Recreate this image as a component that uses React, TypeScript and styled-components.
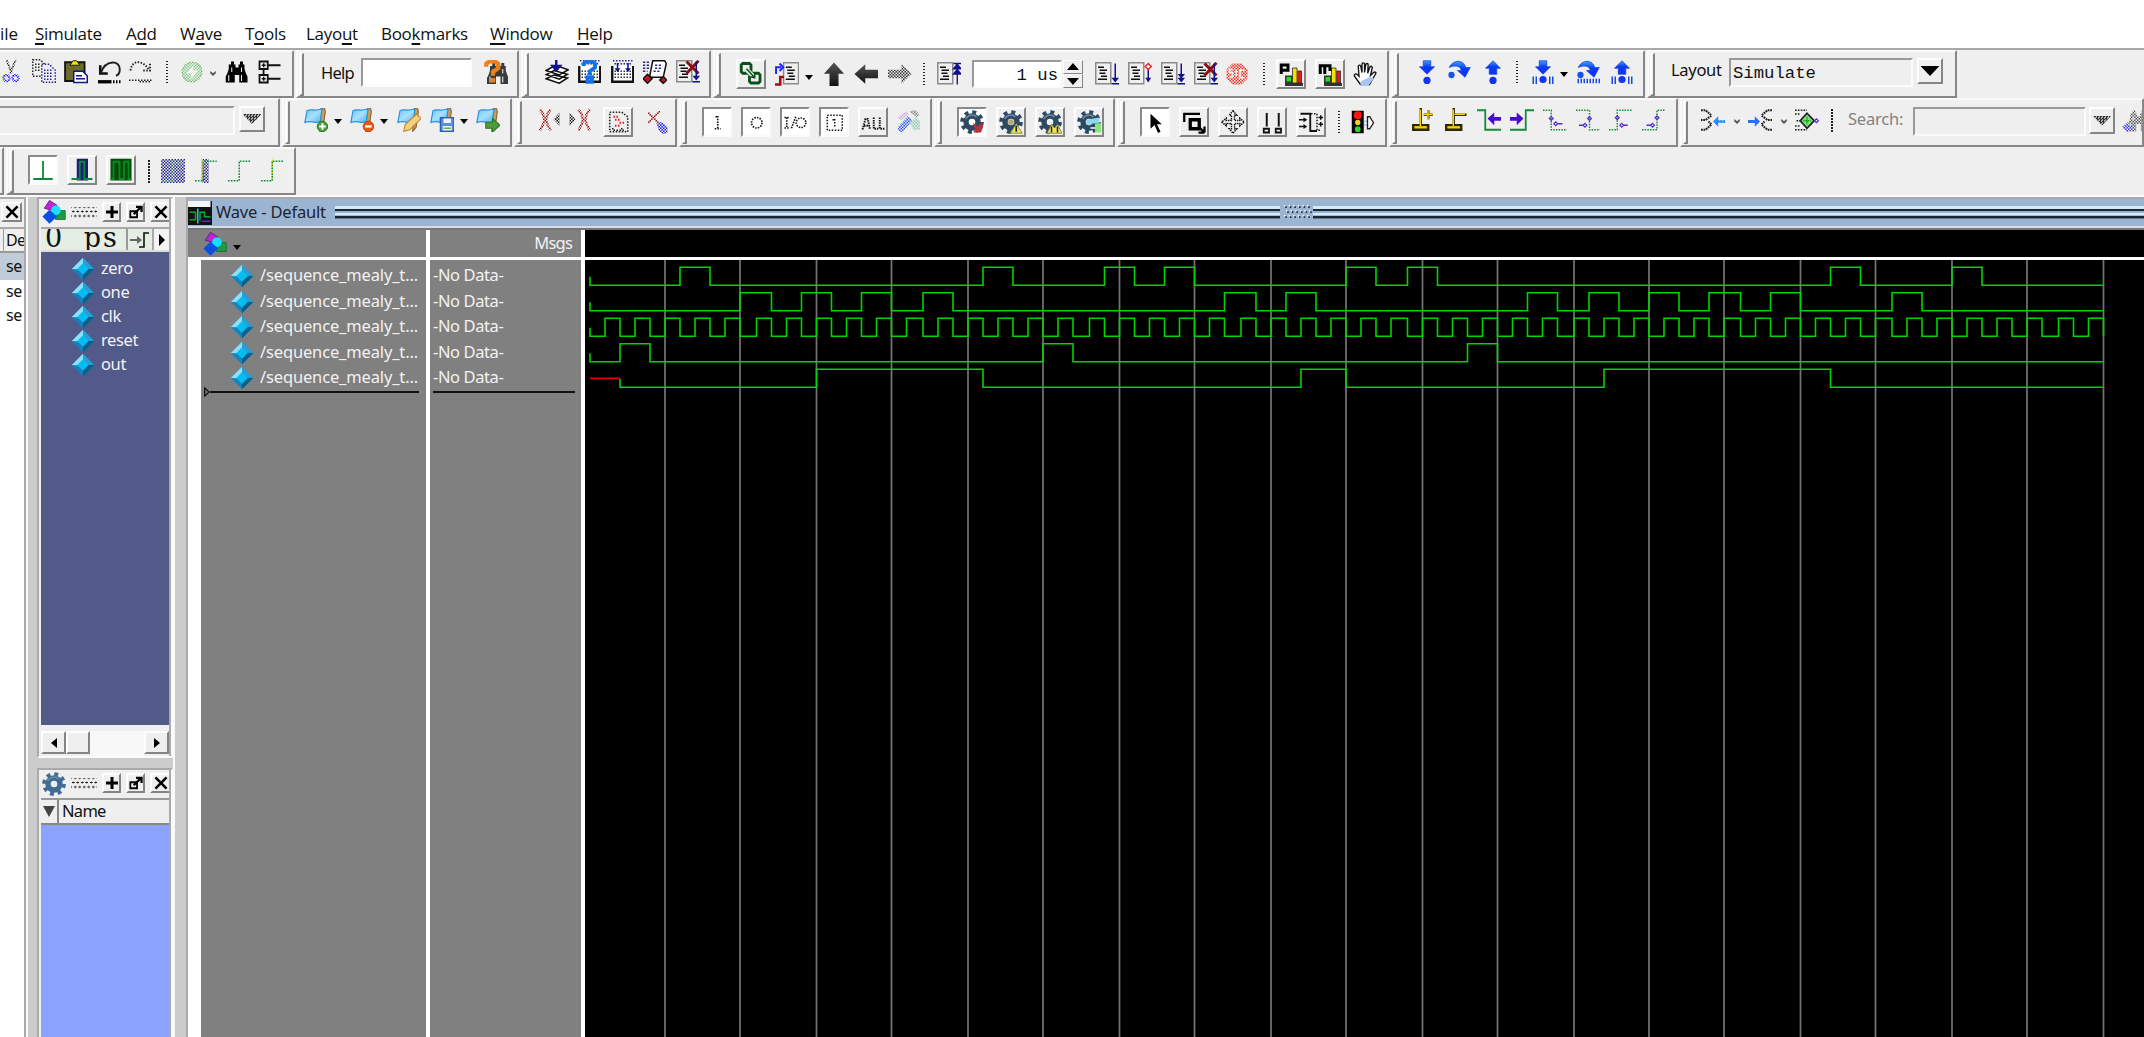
import React, { ReactNode } from "react";
import styled, { createGlobalStyle, css } from "styled-components";

const Global = createGlobalStyle`
  * { box-sizing: border-box; }
  html, body { margin: 0; padding: 0; overflow: hidden; background: #efefef; }
`;

const ui = `"Noto Sans", "Open Sans", sans-serif`;
const mono = `"Liberation Mono", "DejaVu Sans Mono", monospace`;

/* ---------- shell ---------- */
const Window = styled.div`
  width: 2144px;
  height: 1037px;
  display: flex;
  flex-direction: column;
  overflow: hidden;
  background: #efefef;
  font-family: ${ui};
  font-size: 16px;
  color: #111;
`;

const MenuBar = styled.nav`
  height: 50px;
  flex: none;
  display: flex;
  align-items: flex-start;
  padding-top: 22px;
  background: #fff;
  border-bottom: 2px solid #a8a8a8;
`;

const MenuItem = styled.span<{ $w: number; $ls?: number }>`
  width: ${(p) => p.$w}px;
  flex: none;
  font: 17px/24px "Open Sans", sans-serif;
  letter-spacing: ${(p) => p.$ls ?? -0.3}px;
  white-space: nowrap;
  u { text-underline-offset: 3px; text-decoration-thickness: 1.5px; text-decoration-skip-ink: none; }
`;

const BarRow = styled.div<{ $h: number }>`
  height: ${(p) => p.$h}px;
  flex: none;
  display: flex;
  overflow: hidden;
`;

const Bar = styled.section<{ $w: number; $first?: boolean }>`
  width: ${(p) => p.$w}px;
  flex: none;
  margin-right: 2px;
  display: flex;
  align-items: flex-start;
  border: solid;
  border-width: 2px 2px 2px ${(p) => (p.$first ? 0 : 2)}px;
  border-color: #fafafa #868686 #868686 #fafafa;
  overflow: hidden;
`;

const Handle = styled.i`
  width: 5px;
  height: 43px;
  margin: 1px 0 0 1px;
  flex: none;
  border: solid;
  border-width: 1px 2px 2px 2px;
  border-color: #fff #858585 #858585 #fff;
`;

interface Place { $ml?: number; $mt?: number; $w?: number; $h?: number }
const place = css<Place>`
  flex: none;
  margin-left: ${(p) => p.$ml ?? 9}px;
  margin-top: ${(p) => p.$mt ?? 8}px;
`;

const Glyph = styled.svg<Place>`
  ${place}
  width: 24px;
  height: 24px;
  display: block;
`;

const PushButton = styled.div<Place & { $in?: boolean }>`
  ${place}
  width: ${(p) => p.$w ?? 30}px;
  height: ${(p) => p.$h ?? 30}px;
  display: flex;
  align-items: center;
  justify-content: center;
  background: ${(p) => (p.$in ? "#fff" : "#efefef")};
  border: 2px solid;
  border-color: ${(p) => (p.$in ? "#8a8a8a #fafafa #fafafa #8a8a8a" : "#fdfdfd #848484 #848484 #fdfdfd")};
`;

const Field = styled.div<Place & { $plain?: boolean; $right?: boolean }>`
  ${place}
  width: ${(p) => p.$w}px;
  height: ${(p) => p.$h ?? 29}px;
  border: 2px solid;
  border-color: #999 #fcfcfc #fcfcfc #999;
  background: ${(p) => (p.$plain ? "#efefef" : "#fff")};
  font: 17.3px/28px ${mono};
  padding: 0 2px;
  text-align: ${(p) => (p.$right ? "right" : "left")};
  white-space: pre;
`;

const BarLabel = styled.span<Place & { $dim?: boolean; $ls?: number }>`
  ${place}
  width: ${(p) => p.$w}px;
  line-height: 24px;
  font-size: 16.5px;
  letter-spacing: ${(p) => p.$ls ?? -0.8}px;
  color: ${(p) => (p.$dim ? "#828282" : "#111")};
  white-space: nowrap;
`;

const Divider = styled.i<Place>`
  ${place}
  width: 2px;
  height: 24px;
  background: repeating-linear-gradient(#222 0 1.5px, #efefef 1.5px 3px);
`;

const Down = styled.i<Place & { $dim?: boolean }>`
  ${place}
  width: 8px;
  height: 5px;
  background: ${(p) => (p.$dim ? "#555" : "#000")};
  clip-path: ${(p) => (p.$dim ? "polygon(15% 0, 50% 45%, 85% 0, 85% 45%, 50% 100%, 15% 45%)" : "polygon(0 0, 100% 0, 50% 100%)")};
`;

const BigDown = styled.i<{ $dim?: boolean }>`
  width: 19px;
  height: 10px;
  background: ${(p) => (p.$dim ? "repeating-conic-gradient(#333 0 25%, #aaa 0 50%) 0 0/3px 3px" : "#000")};
  clip-path: polygon(0 0, 100% 0, 50% 100%);
`;

const Spinner = styled.div<Place>`
  ${place}
  width: 20px;
  height: 28px;
  display: grid;
  grid-template-rows: 1fr 1fr;
  span { display: flex; align-items: center; justify-content: center; border: 1.5px solid; border-color: #fdfdfd #848484 #848484 #fdfdfd; }
`;

/* ---------- icons, drawn on a 16 unit grid ---------- */
const Ico = ({ ml, mt, dim, children }: { ml?: number; mt?: number; dim?: boolean; children: ReactNode }) => (
  <Glyph viewBox="0 0 16 16" $ml={ml} $mt={mt}>
    {children}
    {dim && <rect width="16" height="16" fill="url(#dither)" />}
  </Glyph>
);
const Inner = ({ dim, children }: { dim?: "grey" | "white"; children: ReactNode }) => (
  <Ico ml={0} mt={0}>
    {children}
    {dim && <rect width="16" height="16" fill={dim === "white" ? "url(#ditherWhite)" : "url(#dither)"} />}
  </Ico>
);

const SharedDefs = styled.svg`
  position: absolute;
  width: 0;
  height: 0;
`;
const Defs = () => (
  <SharedDefs>
    <defs>
      <pattern id="dither" width="2" height="2" patternUnits="userSpaceOnUse">
        <path d="M0 0h1v1H0zM1 1h1v1H1z" fill="#efefef" />
      </pattern>
      <pattern id="ditherWhite" width="2" height="2" patternUnits="userSpaceOnUse">
        <path d="M0 0h1v1H0zM1 1h1v1H1z" fill="#fff" />
      </pattern>
      <linearGradient id="arrowBlue" x1="0" y1="0" x2="0" y2="1">
        <stop offset="0" stopColor="#3aa0ff" /><stop offset=".45" stopColor="#0a3cf0" /><stop offset="1" stopColor="#1030ff" />
      </linearGradient>
      <linearGradient id="arrowDark" x1="0" y1="0" x2="0" y2="1">
        <stop offset="0" stopColor="#555" /><stop offset="1" stopColor="#111" />
      </linearGradient>
      <linearGradient id="flagBlue" x1="0" y1="0" x2="1" y2="1">
        <stop offset="0" stopColor="#6cc4fa" /><stop offset=".5" stopColor="#a6e0ff" /><stop offset="1" stopColor="#4fb4f2" />
      </linearGradient>
    </defs>
  </SharedDefs>
);

const Binoculars = ({ c = "#000" }) => (
  <g fill={c}>
    <path d="M4 1h2v2h1v2h2V3h1V1h2v2h1v3l1 3 1 2v4H9.500v-5H6.500v5H0.500v-4l1-2 1-3V3h1.500z" />
    <path d="M2.500 10v4M4.500 5v3M11 10v4M11 5v3" stroke="#eee" strokeWidth=".7" fill="none" />
  </g>
);
const Doc = () => (
  <>
    <path d="M.5.500h10v14H.500z" fill="#efefef" stroke="#8b8b8b" />
    <path d="M2 3.500h4M3 5.500h5M3 7.500h4M4 9.500h4M2 11.500h6" stroke="#111" />
  </>
);
const Flag = () => (
  <>
    <path d="M11.500 .500h2.300l.4 2-1.500 10.500-2.200 2.500z" fill="#c99d62" stroke="#8a5d25" strokeWidth=".7" />
    <path d="M2 1.800C4.500 .300 7 2.500 12 .500L10.800 9C8 11 5 7.800.600 9.600z" fill="url(#flagBlue)" stroke="#2f93d6" strokeWidth=".8" />
  </>
);
const Gear = ({ c = "#2e4a63", hole = "#efefef" }) => (
  <>
    <circle cx="8" cy="8" r="6.600" fill="none" stroke={c} strokeWidth="2.600" strokeDasharray="2.600 2.580" />
    <circle cx="8" cy="8" r="4" fill="none" stroke={c} strokeWidth="3.600" />
    <path d="M3.800 6A4.500 4.500 0 0 1 11 4.600" stroke="#6d8ba6" strokeWidth="1" fill="none" />
    <circle cx="8" cy="8" r="1.900" fill={hole} />
  </>
);
const BlueDown = () => <path d="M5.500.500h5v4H13L8 9.500 3 4.500h2.500z" fill="url(#arrowBlue)" stroke="#1540d8" strokeWidth=".5" />;
const BlueUp = () => <path d="M8 .500l5 5h-2.500v4h-5v-4H3z" fill="url(#arrowBlue)" stroke="#1540d8" strokeWidth=".5" />;
const BlueOver = () => (
  <>
    <path d="M1.500 5C4-.500 11-.500 12.500 5H15.500L12 11.500 7 7h2.500C9 3.500 4.500 3.500 1.500 5z" fill="url(#arrowBlue)" stroke="#1540d8" strokeWidth=".5" />
    <circle cx="3" cy="10" r="2.100" fill="#1852e8" />
  </>
);
const BlueDot = () => <circle cx="8" cy="13" r="2.400" fill="#1034f0" />;
const Bars = () => <path d="M1.500 11v5M3.500 11v5M12.500 11v5M14.500 11v5" stroke="#1a48e0" />;
const Calendar = () => (
  <>
    <path d="M1.500 4v10.500h14V4" fill="#fff" stroke="#111" strokeWidth="1.600" />
    <path d="M2 .500h13M3 2.500h12" stroke="#26268c" strokeDasharray="1 1" />
    <path d="M3 7.500h11M3 9.500h11M3 11.500h11" stroke="#333" strokeDasharray="1 1" />
  </>
);
const RedCross = () => <path d="M7 1l8 8M15 .500L7 9" stroke="#8b0c0c" strokeWidth="1.900" />;
const NavyDown = () => <path d="M13.500 1v10" stroke="#11118c" />;
const NavyHead = () => <path d="M11 10.500h5l-2.500 3.200zM11 14h5v1h-5z" fill="#11118c" />;

const Chart = ({ l }: { l: "P" | "m" }) => (
  <>
    <path d="M4 9h5v5h7v2H4z" fill="#333" />
    <path d="M5 10h3v3H5z" fill="#1ee01e" />
    <path d="M9 4h3v10H9z" fill="#f6e000" stroke="#222" strokeWidth=".5" />
    <path d="M12.500 6H15v8h-2.500z" fill="#e8191b" stroke="#222" strokeWidth=".5" />
    {l === "P"
      ? <path d="M1.500 8V2h4.500v3.500H2" fill="none" stroke="#000" strokeWidth="2" />
      : <path d="M1.500 8V2.500h3V8M4.500 2.500h3.500V6" fill="none" stroke="#000" strokeWidth="2" />}
  </>
);
const Magnet = () => (
  <>
    <path d="M5 .300l5 3.200L7 7 1.500 5.500z" fill="#c024d8" stroke="#5b0b70" strokeWidth=".5" />
    <path d="M9 7h6.500v6H9z" fill="#1f9a41" stroke="#0b6a25" strokeWidth=".5" />
    <circle cx="9.300" cy="6.800" r="3.200" fill="#14e0ff" />
    <path d="M5 6.500l5 4.500-5 4.800L.300 11z" fill="#0a4fe0" />
  </>
);
const Diamond = () => (
  <>
    <path d="M8 .5L15.500 8 8 15.500.500 8z" fill="#1484bf" />
    <path d="M8 .5L.500 8l4.200.2L8 4.500z" fill="#8fe0f6" />
    <path d="M8 .5L15.500 8l-4.200.2L8 4.500z" fill="#24a0da" />
    <path d="M8 15.500L15.500 8l-4.200-.2L8 11.600z" fill="#075f8b" />
    <path d="M8 4.200L11.800 8 8 11.800 4.200 8z" fill="#06bdf2" />
  </>
);
const EdgeStep = ({ d, arrow }: { d: string; arrow: ReactNode }) => (
  <>
    <path d={d} fill="none" stroke="#138a3c" strokeDasharray="1 .8" />
    {arrow}
  </>
);
const Spot = ({ x, y }: { x: number; y: number }) => (
  <path d={`M${x} ${y - 1.3}l1.300 1.300-1.300 1.300-1.300-1.300z`} fill="none" stroke="#5a28d0" strokeWidth=".8" />
);

/* ---------- docked panels ---------- */
const Dock = styled.div`
  flex: 1;
  display: flex;
  min-height: 0;
  border-top: 2px solid #fafafa;
`;
const SidePane = styled.aside`
  width: 26px;
  flex: none;
  background: #fff;
  border-top: 2px solid #aaa;
  border-right: 2px solid #aaa;
  overflow: hidden;
`;
const PaneTitle = styled.header<{ $h: number }>`
  height: ${(p) => p.$h}px;
  flex: none;
  display: flex;
  align-items: flex-start;
  background: #efefef;
  overflow: hidden;
`;
const SideHead = styled.div`
  height: 26px;
  border-top: 2px solid #aaa;
  border-bottom: 2px solid #999;
  background: #efefef;
  padding-left: 3px;
  span { display: block; border-left: 1.5px solid #999; padding-left: 2px; line-height: 23px; font-size: 16px; letter-spacing: -0.6px; }
`;
const SideRow = styled.div<{ $on?: boolean; $h: number }>`
  height: ${(p) => p.$h}px;
  line-height: ${(p) => p.$h}px;
  padding-left: 6px;
  width: 24px;
  overflow: hidden;
  font-size: 16px;
  letter-spacing: -0.3px;
  background: ${(p) => (p.$on ? "#c0ccda" : "#fff")};
`;
const Gutter = styled.div<{ $w: number }>`
  width: ${(p) => p.$w}px;
  flex: none;
  background: #ccc;
  border-left: 2px solid #fafafa;
`;
const Column = styled.div`
  width: 136px;
  flex: none;
  display: flex;
  flex-direction: column;
  gap: 10px;
  background: #ccc;
`;
const Panel = styled.section<{ $h: number }>`
  height: ${(p) => p.$h}px;
  flex: none;
  display: flex;
  flex-direction: column;
  padding-left: 2px;
  padding-right: 2px;
  background: #efefef;
  border: 2px solid;
  border-color: #aaa #fafafa #fafafa #aaa;
  box-shadow: inset -2px 0 #aaa;
`;
const Grip = styled.i`
  width: 26px;
  height: 12px;
  margin: 8px 0 0 5px;
  background:
    radial-gradient(circle, #222 0 .9px, transparent 1.1px) 0 0 / 4.500px 9px,
    radial-gradient(circle, #222 0 .9px, transparent 1.1px) 2px 4.500px / 4.500px 9px;
  flex: none;
`;
const TimeStrip = styled.div`
  height: 25px;
  flex: none;
  display: flex;
  overflow: hidden;
  border-top: 2px solid #aaa;
  border-bottom: 2px solid #ddd;
  background: #e4eee4;
`;
const TimeText = styled.span`
  width: 87px;
  flex: none;
  padding-left: 4px;
  font: 27px/18px "DejaVu Serif", serif;
  letter-spacing: 2px;
  word-spacing: 9px;
  white-space: pre;
  border-right: 2px solid #999;
`;
const TimeBtn = styled.span<{ $w: number }>`
  width: ${(p) => p.$w}px;
  flex: none;
  display: flex;
  align-items: center;
  justify-content: center;
  border-right: 2px solid #aaa;
  background: ${(p) => (p.$w < 20 ? "#f4f4f4" : "transparent")};
`;
const ObjectList = styled.ul`
  flex: 1;
  margin: 0;
  padding: 5px 0 0 30px;
  list-style: none;
  background: #525a8a;
`;
const Lifted = styled.span`
  padding-bottom: 3px;
`;
const ObjectRow = styled.li`
  height: 24px;
  display: flex;
  align-items: center;
  gap: 6px;
  color: #f4f4f4;
  font-size: 16.5px;
  letter-spacing: -0.4px;
`;
const HScroll = styled.div`
  height: 31px;
  flex: none;
  padding-top: 6px;
  display: flex;
  background: #efefef;
`;
const HTrack = styled.i`
  flex: 1;
  background: #f8f8f8;
`;
const NameHead = styled.div`
  height: 27px;
  flex: none;
  display: flex;
  align-items: center;
  border-top: 2px solid #999;
  border-bottom: 2px solid #888;
  font-size: 16.5px;
  letter-spacing: -0.7px;
  > i { width: 18px; height: 100%; border-right: 2px solid #888; display: flex; align-items: center; justify-content: center; margin-right: 3px; }
`;
const Empty = styled.div`
  flex: 1;
  background: #8ba2ff;
`;

/* ---------- wave window ---------- */
const WaveWindow = styled.main`
  flex: 1;
  min-width: 0;
  display: flex;
  flex-direction: column;
  border-top: 2px solid #aaa;
  border-left: 2px solid #aaa;
  background: #fff;
`;
const WaveTitle = styled.header`
  height: 29px;
  flex: none;
  display: flex;
  align-items: center;
  padding-bottom: 1px;
  background: #9ab4d2;
  border-bottom: 2px solid #d8dde2;
  color: #1c2430;
  font-size: 16.5px;
`;
const TitleText = styled.span`
  width: 123px;
  flex: none;
  padding: 0 0 2px 4px;
  letter-spacing: -0.2px;
  white-space: nowrap;
`;
const Stripes = styled.i<{ $w?: number }>`
  ${(p) => (p.$w ? `width:${p.$w}px;flex:none;` : "flex:1;")}
  height: 13px;
  background: linear-gradient(#cfeef6 0 2.500px, #5c7288 3px, #1c2836 3.500px 4.500px, #8fa9c6 5px, #9ab4d2 6px 7px, #cfeef6 7.500px 9px, #6f86a0 10px, #1c2836 10.500px 11.500px, #5f7389 12px 13px);
`;
const WaveHead = styled.div`
  height: 32px;
  flex: none;
  display: flex;
  border-top: 2px solid #777;
  border-bottom: 3px solid #fff;
`;
const HeadCell = styled.div<{ $w?: number; $black?: boolean }>`
  ${(p) => (p.$w ? `width:${p.$w}px;flex:none;` : "flex:1;")}
  display: flex;
  align-items: flex-start;
  background: ${(p) => (p.$black ? "#000" : "#808080")};
  border-right: ${(p) => (p.$black ? "0" : "4px solid #fff")};
  color: #f2f2f2;
`;
const MsgsLabel = styled.span`
  margin: 1px 9px 0 auto;
  font-size: 16.5px;
  letter-spacing: -0.8px;
  line-height: 24px;
`;
const WaveBody = styled.div`
  flex: 1;
  min-height: 0;
  display: flex;
`;
const NameColumn = styled.div`
  width: 242px;
  flex: none;
  background: #808080;
  border-left: 13px solid #fff;
  border-right: 4px solid #fff;
`;
const ValueColumn = styled.div`
  width: 155px;
  flex: none;
  background: #808080;
  border-right: 4px solid #fff;
`;
const Signal = styled.div<{ $pl: number; $ls: number }>`
  height: 25.5px;
  display: flex;
  align-items: center;
  gap: 6px;
  padding-left: ${(p) => p.$pl}px;
  color: #f2f2f2;
  font-size: 16.5px;
  letter-spacing: ${(p) => p.$ls}px;
  white-space: nowrap;
`;
const SignalList = styled.div`
  padding-top: 3.5px;
`;
const EndLine = styled.div<{ $l: number; $r: number }>`
  height: 2px;
  margin: -0.5px ${(p) => p.$r}px 0 ${(p) => p.$l}px;
  background: #111;
`;
const InsertRow = styled.div`
  display: flex;
  align-items: center;
  height: 10px;
  margin-top: -4.5px;
  padding-left: 3px;
  &::after { content: ""; width: 209px; height: 2px; background: #111; }
`;
const Plot = styled.svg`
  flex: none;
  width: 1559px;
  height: 777px;
  display: block;
  background: #000;
`;

/* x of the n-th half clock period, snapped to the drawing grid */
const at = (n: number) => 5 + Math.floor(n * 10.0933) * 1.5;
const clockPulses = Array.from({ length: 50 }, (_, i) => [i * 2 + 1, i * 2 + 2]);
const traces: { start: number; pulses: number[][] }[] = [
  { start: 0, pulses: [[6, 8], [26, 28], [34, 36], [38, 40], [50, 52], [54, 56], [82, 84], [90, 92]] },
  { start: 0, pulses: [[10, 12], [14, 16], [18, 20], [22, 24], [42, 44], [46, 48], [62, 64], [66, 68], [70, 72], [74, 76], [78, 80], [86, 88]] },
  { start: 0, pulses: clockPulses },
  { start: 0, pulses: [[2, 4], [30, 32], [58, 60]] },
  { start: 2, pulses: [[15, 26], [47, 50], [67, 82]] },
];
const tracePath = (start: number, pulses: number[][], row: number) => {
  const low = 25.3 + row * 25.5;
  const high = low - 18;
  const steps = pulses.map(([a, b]) => `H${at(a)}V${high}H${at(b)}V${low}`).join("");
  return `M${at(start)} ${low - 8.5}V${low}${steps}H${at(100)}`;
};
const Waves = () => (
  <Plot viewBox="0 0 1559 777">
    {Array.from({ length: 20 }, (_, i) => (
      <path key={i} d={`M${at((i + 1) * 5)} 0V777`} stroke="#757575" strokeWidth="1.7" />
    ))}
    {traces.map((t, i) => (
      <path key={i} d={tracePath(t.start, t.pulses, i)} fill="none" stroke="#00d400" strokeWidth="1.6" />
    ))}
    <path d={`M${at(0)} 118.300H${at(2)}`} stroke="#e00000" strokeWidth="1.7" />
  </Plot>
);

const Plus = () => <Inner><path d="M8 4v8M4 8h8" stroke="#000" strokeWidth="2" /></Inner>;
const Undock = () => (
  <Inner><path d="M4.200 7.500h4.500v4H4.200z" fill="none" stroke="#000" strokeWidth="1.200" /><path d="M6.500 9.500l4.500-4.500M8 4.500h3.700V8" stroke="#000" strokeWidth="1.500" fill="none" /></Inner>
);
const Close = () => <Inner><path d="M4.300 4.300l7.400 7.400M11.700 4.300l-7.400 7.400" stroke="#000" strokeWidth="1.700" /></Inner>;
const PanelButtons = () => (
  <>
    <Grip />
    <PushButton $ml={5} $mt={3} $w={19} $h={20}><Plus /></PushButton>
    <PushButton $ml={5} $mt={3} $w={19} $h={20}><Undock /></PushButton>
    <PushButton $ml={5} $mt={3} $w={21} $h={20}><Close /></PushButton>
  </>
);

const WandStroke = ["#c8a8d8", "#2a5af0", "#8fcfae"];

export default function App() {
  return (
    <Window>
      <Global />
      <Defs />
      <MenuBar>
        <MenuItem $w={35} $ls={0}>ile</MenuItem>
        <MenuItem $w={91}><u>S</u>imulate</MenuItem>
        <MenuItem $w={54}>A<u>d</u>d</MenuItem>
        <MenuItem $w={65}>W<u>a</u>ve</MenuItem>
        <MenuItem $w={61}>T<u>o</u>ols</MenuItem>
        <MenuItem $w={75}>Layo<u>u</u>t</MenuItem>
        <MenuItem $w={109}>Boo<u>k</u>marks</MenuItem>
        <MenuItem $w={87}><u>W</u>indow</MenuItem>
        <MenuItem $w={60}><u>H</u>elp</MenuItem>
      </MenuBar>

      <BarRow $h={48}>
        <Bar $w={294} $first>
          <Ico ml={-1} dim><path d="M5 0l3.500 9M11 0L7.500 9" stroke="#222" strokeWidth="1.300" /><circle cx="5" cy="12" r="2" fill="none" stroke="#1515ff" strokeWidth="1.500" /><circle cx="11" cy="12" r="2" fill="none" stroke="#1515ff" strokeWidth="1.500" /></Ico>
          <Ico mt={7}><path d="M.5.500h5l3 3v8h-8zM2 3.500h4M2 5.500h4M2 7.500h4" fill="none" stroke="#222" strokeDasharray="1 1" /><path d="M6.500 3.500h5l4 4v8h-9zM8 7.500h6M8 9.500h6M8 11.500h6M8 13.500h6" fill="#efefef" stroke="#22229a" strokeDasharray="1 1" /></Ico>
          <Ico ml={8}><path d="M.700 1.500h13v12.500H.700z" fill="#6b6b2e" stroke="#111" strokeWidth="1.200" /><path d="M4 3.500l2-3h2.500l2 3z" fill="#f4e400" stroke="#111" strokeWidth=".6" /><path d="M6.500 7.500h6l3 3v4.500h-9z" fill="#fff" stroke="#15158c" /><path d="M8 10.500h4M8 12.500h6" stroke="#15158c" /></Ico>
          <Ico ml={10}><path d="M1.500 3.500v5.500h5" fill="none" stroke="#111" strokeWidth="1.700" /><path d="M2 8.500C5-.500 15 0 14.500 6.500c0 2-1 3.500-2.500 4" fill="none" stroke="#222" strokeWidth="1.300" /><path d="M0 14.500h9" stroke="#000" strokeWidth="2.200" /><path d="M10 14.500h6" stroke="#000" strokeWidth="2" strokeDasharray="1 1" /></Ico>
          <Ico ml={7}><path d="M1 7C2-.500 9 0 13 6M14 2.500V7H9.500" fill="none" stroke="#222" strokeWidth="1.300" strokeDasharray="1 1" /><path d="M0 13.500h16" stroke="#222" strokeDasharray="1 1" /><path d="M7 14.500h8" stroke="#222" strokeDasharray="1 1" /></Ico>
          <Divider $ml={13} $mt={9} />
          <Ico ml={12} dim><circle cx="8" cy="8" r="6.500" fill="#8fd08f" stroke="#5fae62" strokeWidth="1" /><path d="M9 3.500L4.500 9H8l-1 4 5-6H8.500z" fill="#fff" /></Ico>
          <Down $ml={5} $mt={19} $dim />
          <Ico ml={8}><Binoculars /></Ico>
          <Ico><path d="M1 1h5.500v5H1zM1 10h5.500v5H1zM7 3.500h8M7 12.500h8M3.700 6v4" fill="none" stroke="#111" strokeWidth="1.200" /><path d="M2.500 3.500h2.600M3.800 2.200v2.600M2.500 12.500h2.600M3.800 11.200v2.600" stroke="#111" strokeWidth=".9" /></Ico>
        </Bar>
        <Bar $w={223}>
          <Handle />
          <BarLabel $ml={17} $mt={9} $w={36}>Help</BarLabel>
          <Field $ml={4} $mt={6} $w={111} $h={29} />
          <Ico ml={12}><g transform="translate(1.500 1)"><Binoculars c="#3a3a3a" /></g><path d="M1.500 4.500V2.500l2-1.500h4l2 1.500v3L6 8v2.500" fill="none" stroke="#f08018" strokeWidth="2.800" /><path d="M4.500 12h3v3h-3z" fill="#f08018" /></Ico>
        </Bar>
        <Bar $w={190}>
          <Handle />
          <Ico ml={16}><path d="M.700 12.500L6 10l9 2-5.500 3.500zM.700 9.700L6 7l9 2.500-5.500 3.300zM.700 7L7 3.500l8.500 3-6 3.500z" fill="#fff" stroke="#111" /><path d="M7.500 0v5M5 4l2.500 3L10 4z" stroke="#11118c" strokeWidth="1.600" fill="#11118c" /></Ico>
          <Ico ml={8}><Calendar /><path d="M4.500 4V2.500L6 1h4.500L12 2.500V5L8.500 7.500v2.500M7 11.500h3v3H7z" stroke="#1273e8" fill="#1273e8" fillOpacity="0" strokeWidth="2.600" /></Ico>
          <Ico><Calendar /><path d="M3 5.500h4L5 8zM10 5.500h4L12 8z" fill="#11118c" /><path d="M5 2v4M12 2v4" stroke="#11118c" /></Ico>
          <Ico><path d="M6.500.500h8l1 2-2 9h-8l-1-1z" fill="#fff" stroke="#111" /><path d="M0 1.500h5M0 3.500h4M0 5.500h4M0 7.500h3M8 3.500h5M8 5.500h5M7 7.500h5" stroke="#26268c" strokeDasharray="1.500 1" /><path d="M3 9.500l3 3-3 3-3-3zM13.500 11l2.300 2.300-2.300 2.300-2.300-2.300z" fill="#d01028" stroke="#111" /></Ico>
          <Ico><Doc /><RedCross /><NavyDown /><NavyHead /></Ico>
        </Bar>
        <Bar $w={676}>
          <Handle />
          <PushButton $ml={15} $mt={7}><Inner><path d="M2.500 1h4.500l1 1v4.500l-1 1H2.500l-1-1V2zM8 7.500h5l1 1V13l-1 1H8l-1-1V8.500z" fill="none" stroke="#0a4f1c" strokeWidth="1.900" /><path d="M5.500 5.500l4.500 4.500" stroke="#efefef" strokeWidth="3" /><path d="M5 4.500l5.500 6M7.500 9.800l3 .7V7.500" stroke="#0a4f1c" strokeWidth="1" fill="none" /></Inner></PushButton>
          <Ico mt={10}><g transform="translate(5.200)"><Doc /></g><path d="M.700 8V3.500H4M3 1l2.500 2.500L3 6" fill="none" stroke="#2424ff" strokeWidth="1.300" /><path d="M0 15h3.500V10H6" fill="none" stroke="#a01010" strokeWidth="1.700" /></Ico>
          <Down $ml={6} $mt={23} />
          <Ico mt={10}><path d="M8 .300l6.700 7.500h-3.700V16H5V7.800H1.300z" fill="url(#arrowDark)" /></Ico>
          <Ico ml={8} mt={10}><path d="M.300 8L7.500 1.500v3.700H16v5.600H7.500v3.700z" fill="url(#arrowDark)" /></Ico>
          <Ico ml={10} mt={10} dim><path d="M15.800 8L9 1.500v3.700H0v5.600h9v3.700z" fill="#333" /></Ico>
          <Divider $ml={11} $mt={11} />
          <Ico ml={12} mt={10}><Doc /><path d="M13.500 2v13M11 1h5M11 4.500l2.500-3 2.500 3zM11 8l2.500-3L16 8z" stroke="#11118c" fill="#11118c" strokeWidth=".9" /></Ico>
          <Field $ml={11} $mt={8} $w={90} $h={28} $right>1 us</Field>
          <Spinner $ml={1} $mt={8}>
            <span><svg width="12" height="8"><path d="M6 0l6 7H0z" /></svg></span>
            <span><svg width="12" height="8"><path d="M6 8L0 1h12z" /></svg></span>
          </Spinner>
          <Ico ml={12} mt={10}><Doc /><NavyDown /><NavyHead /></Ico>
          <Ico mt={10}><Doc /><path d="M13.500 5v8" stroke="#11118c" /><path d="M13.500 1l2 2-2 2-2-2z" fill="#fff" stroke="#f02020" /><path d="M11.500 10.500h4l-2 3z" fill="#11118c" /></Ico>
          <Ico mt={10}><Doc /><NavyDown /><path d="M11 8h5l-2.500 3z" fill="#11118c" /><NavyHead /></Ico>
          <Ico mt={10}><Doc /><RedCross /><NavyDown /><NavyHead /></Ico>
          <Ico ml={7} mt={10} dim><path d="M5 1h6l4 4v6l-4 4H5l-4-4V5z" fill="#f02a1c" /><path d="M5 5H3v2h2v3H3M7.500 5v5M13 5.500h-3v5h3" fill="none" stroke="#fff" /></Ico>
          <Divider $ml={14} $mt={11} />
          <PushButton $ml={11} $mt={7}><Inner><Chart l="P" /></Inner></PushButton>
          <PushButton $mt={7}><Inner><Chart l="m" /></Inner></PushButton>
          <Ico ml={8} mt={10}><path d="M5 15L1 9.500C.500 8 2 7.500 3 8.500l1 1L3.500 3c0-1.200 1.500-1.200 1.700 0L6 7V1.500c0-1.200 1.700-1.200 1.700 0V7l.8-5.200c.2-1.200 1.700-1 1.600.2L9.800 7.500l1.400-4c.4-1.100 1.900-.6 1.600.5L11.700 9l2-2c1-.8 2 0 1.300 1L11 15z" fill="#fff" stroke="#111" strokeWidth=".9" /><path d="M5 13l6-3 3 1-4 5H5z" fill="#a9c6f2" /></Ico>
        </Bar>
        <Bar $w={254}>
          <Handle />
          <Ico ml={16}><BlueDown /><g transform="translate(0 .6)"><BlueDot /></g></Ico>
          <Ico ml={8}><BlueOver /></Ico>
          <Ico ml={10}><BlueUp /><g transform="translate(0 .6)"><BlueDot /></g></Ico>
          <Divider $ml={11} $mt={9} />
          <Ico ml={13}><BlueDown /><BlueDot /><Bars /></Ico>
          <Down $ml={5} $mt={20} />
          <Ico ml={8}><BlueOver /><path d="M1 14h15" stroke="#1a48e0" strokeWidth="3" strokeDasharray="1 1" /></Ico>
          <Ico ml={10}><BlueUp /><BlueDot /><Bars /></Ico>
        </Bar>
        <Bar $w={310}>
          <Handle />
          <BarLabel $ml={16} $mt={6} $w={56} $ls={-0.3}>Layout</BarLabel>
          <Field $ml={2} $mt={6} $w={184} $plain>Simulate</Field>
          <PushButton $ml={4} $mt={6} $w={26} $h={26}><BigDown /></PushButton>
        </Bar>
      </BarRow>

      <BarRow $h={49}>
        <Bar $w={280} $first>
          <Field $ml={-4} $mt={6} $w={239} $plain />
          <PushButton $ml={4} $mt={6} $w={26} $h={26}><BigDown $dim /></PushButton>
        </Bar>
        <Bar $w={230}>
          <Handle />
          <Ico ml={14}><Flag /><circle cx="12.300" cy="12.300" r="3.500" fill="#48a13e" stroke="#256f20" strokeWidth=".6" /><path d="M12.300 10.100v4.400M10.100 12.300h4.400" stroke="#fff" strokeWidth="1.300" /></Ico>
          <Down $ml={6} $mt={19} />
          <Ico ml={8}><Flag /><circle cx="12.300" cy="12.300" r="3.500" fill="#e85a10" stroke="#b33c05" strokeWidth=".6" /><path d="M10.100 12.300h4.400" stroke="#fff" strokeWidth="1.500" /></Ico>
          <Down $ml={6} $mt={19} />
          <Ico><Flag /><path d="M4.500 15.500l1-4.500 7.500-7 3 3-7.500 7.500z" fill="#f3d07e" stroke="#b98528" strokeWidth=".7" /></Ico>
          <Ico><Flag /><path d="M7 6.500h9v9H7z" fill="#5b8fd8" stroke="#2c5fae" /><path d="M9 7h5v3H9zM8.500 12h6v3h-6z" fill="#eef3fb" /><path d="M9 13.500h5" stroke="#6ab04a" /></Ico>
          <Down $ml={6} $mt={19} />
          <Ico ml={8}><Flag /><path d="M6.500 9.500H11V7l5 4.500-5 4.500v-2.500H6.500z" fill="#4d9c3c" stroke="#2d7420" strokeWidth=".7" /></Ico>
        </Bar>
        <Bar $w={163}>
          <Handle />
          <Ico ml={15} dim><path d="M2 1l2 3 1 4-1 3-2 4M9 1L7 4 6 8l1 3 2 4" fill="none" stroke="#a01212" strokeWidth="1.700" /><path d="M15 3v9L11 7.500z" fill="#111" /></Ico>
          <Ico ml={7} dim><path d="M7 1l2 3 1 4-1 3-2 4M14.500 1l-2 3-1 4 1 3 2 4" fill="none" stroke="#a01212" strokeWidth="1.700" /><path d="M1 3v9l4-4.500z" fill="#111" /></Ico>
          <PushButton $ml={11} $mt={7}><Inner><path d="M2.500 1.500h8l4 3v10h-12zM5 13.500h7M4 12.500h2M10 12.500h2" fill="none" stroke="#222" strokeDasharray="1 1" strokeWidth="1.100" /><path d="M5 4.500h3M6 6.500h3M9 8.500h3M6 10.500h4" stroke="#e02020" strokeDasharray="1 1" strokeWidth="1.200" /></Inner></PushButton>
          <Ico ml={12} mt={11} dim><path d="M2 1l8 8M10 0L2 8" stroke="#a01212" strokeWidth="1.600" /><path d="M7.500 7.500h4l3.500 3v4l-3 1-3-3z" fill="#2020e8" /></Ico>
        </Bar>
        <Bar $w={253}>
          <Handle />
          <PushButton $ml={15} $mt={7} $in><Inner><path d="M7 4.500h2M8.500 4v8M6.500 12.500h4" stroke="#111" strokeWidth="1.100" strokeDasharray="1 .8" fill="none" /></Inner></PushButton>
          <PushButton $mt={7} $in><Inner><circle cx="8.500" cy="8.500" r="3.500" fill="none" stroke="#111" strokeWidth="1.100" strokeDasharray="1 .8" /></Inner></PushButton>
          <PushButton $mt={7} $in><Inner><path d="M1 5h3M2.500 5v7M1 12h3M8.500 4.500l-3 8" stroke="#111" strokeWidth="1.100" strokeDasharray="1 .8" fill="none" /><circle cx="12" cy="8.500" r="3.200" fill="none" stroke="#111" strokeWidth="1.100" strokeDasharray="1 .8" /></Inner></PushButton>
          <PushButton $mt={7} $in><Inner><path d="M3.500 3.500h10v10h-10z" fill="none" stroke="#111" strokeDasharray="1 1" /><path d="M7 6.500h2M8.500 6v6" fill="none" stroke="#111" strokeDasharray="1 1" /></Inner></PushButton>
          <PushButton $mt={7}><Inner><path d="M1 13l2-7h1.500l1.500 7M2 10.500h4M8.500 5v7.500h3M12.500 5v7.500H16" fill="none" stroke="#111" strokeWidth="1.300" strokeDasharray="1 .6" /></Inner></PushButton>
          <Ico ml={8} mt={10} dim>
            <path d="M1 5l6-4 1.500 2L3 7z" fill={WandStroke[0]} />
            <path d="M1.500 11L8 4l3 3-6.500 7.500c-2 1-4-1-3-3.500z" fill={WandStroke[1]} />
            <path d="M9 9l4-4 3 2v6l-4 .5z" fill={WandStroke[2]} />
            <path d="M9 1l4-1L15.500 3 14 5z" fill="#777" />
          </Ico>
        </Bar>
        <Bar $w={181}>
          <Handle />
          <PushButton $ml={15} $mt={7} $in><Inner><Gear hole="#fff" /><path d="M8.500 8.500L12 11l3-2.500.5 2.500-1.500 4H9l1-2.500z" fill="#b8323a" /></Inner></PushButton>
          <PushButton $mt={7}><Inner><Gear hole="#b8a878" /><path d="M7.500 15.500L11.500 9l4 6.500z" fill="#ece45c" stroke="#77722a" strokeWidth=".5" /><path d="M11.500 10.500v4" stroke="#222" strokeWidth="1.100" /></Inner></PushButton>
          <PushButton $mt={7}><Inner><Gear /><path d="M6 15.500L9 9.500l2 2.500 2-2.500 3 6z" fill="#ece45c" stroke="#77722a" strokeWidth=".5" /><path d="M9 11v4M13 11v4" stroke="#222" /></Inner></PushButton>
          <PushButton $mt={7}><Inner><Gear hole="#8fd4ea" /><path d="M9 6l6-1v4H9z" fill="#8fd4ea" /><path d="M12 9h4v6h-4z" fill="#86e77c" /><path d="M9 12h3" stroke="#fff" /></Inner></PushButton>
        </Bar>
        <Bar $w={270}>
          <Handle />
          <PushButton $ml={15} $mt={7} $in><Inner><path d="M5 2.500l7.500 7H9.300l2.400 5-1.700.8L7.700 10 5 12.500z" fill="#000" /></Inner></PushButton>
          <PushButton $mt={7}><Inner><path d="M1.500 8V2.500H12M15 15v-4M15 15h-4M10.500 10.500L15 15" fill="none" stroke="#000" strokeWidth="1.500" /><path d="M5.500 6.500h6v6h-6z" fill="#efefef" stroke="#000" strokeWidth="2.200" /></Inner></PushButton>
          <PushButton $mt={7}><Inner><path d="M8 .500l2.500 3H9v3.500h3.500V5.500L15.500 8l-3 2.500V9H9v3.500h1.500L8 15.500l-2.500-3H7V9H3.500v1.500L.500 8l3-2.500V7H7V3.500H5.500z" fill="#fff" stroke="#111" strokeDasharray="1 .5" strokeWidth="1" /></Inner></PushButton>
          <PushButton $mt={7}><Inner><path d="M4.500 2v9M12.500 2v9" stroke="#111" strokeWidth="1.300" /><path d="M2.500 12.500H6v2.500H2.500zM10.500 12.500H14v2.500h-3.500z" fill="none" stroke="#111" strokeWidth="1.200" /></Inner></PushButton>
          <PushButton $mt={7}><Inner><path d="M1 2.500h6.500v11.500H12" fill="none" stroke="#111" strokeWidth="1.200" /><path d="M8 2.500h4v11h3" fill="none" stroke="#111" strokeDasharray="1 1" /><path d="M0 6.500h4M0 11h4M13 5h3M13 9.500h3M14.500 3.500v3M14.500 8v3" stroke="#111" /><path d="M3 4.800L5.500 6.500 3 8.200zM3 9.300L5.500 11 3 12.700z" fill="#111" /></Inner></PushButton>
          <Divider $ml={12} $mt={11} />
          <Ico ml={11} mt={10}><path d="M.500.500h8v15h-8z" fill="#000" /><circle cx="4.500" cy="3.500" r="2.700" fill="#ff1414" /><circle cx="4.500" cy="8.300" r="1.800" fill="#f0d020" /><circle cx="4.500" cy="12.800" r="1.900" fill="#28d828" /><path d="M8.500 7.500h2M8.500 10h2" stroke="#6ab8d8" strokeWidth=".7" /><path d="M11 4.500v8h1.500L15 8.500 12.500 4.500z" fill="#fff" stroke="#222" strokeWidth=".9" /></Ico>
        </Bar>
        <Bar $w={289}>
          <Handle />
          <Ico ml={14}><path d="M1.500 11.500h10v3h-10zM6.500 0v11M8.500 4.500h6M11.500 1.500v6" fill="#f4cc00" stroke="#2e2600" strokeWidth="1.600" /><path d="M6.200 1v11M2.300 12.700h8M8.500 4.300h6M11.300 1.500v6" stroke="#f8d400" strokeWidth="1" /></Ico>
          <Ico><path d="M1.500 11.500h10v3h-10zM6.500 0v11M7 4.500h8" fill="#f4cc00" stroke="#2e2600" strokeWidth="1.600" /><path d="M6.200 1v11M2.300 12.700h8M7 4.200h7" stroke="#f8d400" strokeWidth="1" /></Ico>
          <Ico><path d="M0 1.500h5.500v13H16" fill="none" stroke="#138a3c" strokeWidth="1.200" /><path d="M7 7l4.500-4v3H16v2.500h-4.500v3z" fill="#4a08d0" /></Ico>
          <Ico><path d="M0 14.500h10.500v-13H16" fill="none" stroke="#138a3c" strokeWidth="1.200" /><path d="M9 7L4.500 3v3H0v2.500h4.500v3z" fill="#4a08d0" /></Ico>
          <Ico><EdgeStep d="M0 1.500h5.500v13H16" arrow={<><Spot x={5.500} y={7} /><Spot x={8.500} y={10.500} /><path d="M10 10.500h3" stroke="#5a28d0" /></>} /></Ico>
          <Ico><EdgeStep d="M0 1.500h9v13h7" arrow={<><Spot x={9} y={7} /><Spot x={6} y={11.500} /><path d="M2 11.500h3" stroke="#5a28d0" /></>} /></Ico>
          <Ico><EdgeStep d="M0 14.500h5.500v-13H15" arrow={<><Spot x={5.500} y={6.500} /><Spot x={8.500} y={11.500} /><path d="M10 11.500h2.500" stroke="#5a28d0" /></>} /></Ico>
          <Ico><EdgeStep d="M0 14.500h10v-13h5" arrow={<><Spot x={10} y={6.500} /><Spot x={7} y={11.500} /><path d="M3 11.500h3" stroke="#5a28d0" /></>} /></Ico>
        </Bar>
        <Bar $w={464}>
          <Handle />
          <Ico ml={13}><path d="M0 1.500h3l4 3.500-4 3H0M0 14.500h3l4-3.500-2-2" fill="none" stroke="#222" strokeWidth="1.400" strokeDasharray="1.200 .5" /><path d="M8 9l3.500-3.500v2.500H16v2h-4.500v2.500z" fill="#2c8cff" /><path d="M12 8.500h4M12 10h4" stroke="#efefef" strokeWidth=".5" strokeDasharray="1 1" /></Ico>
          <Down $ml={8} $mt={19} $dim />
          <Ico ml={7}><path d="M16 1.500h-3L9 5l4 3h3M16 14.500h-3L9 11l2-2" fill="none" stroke="#222" strokeWidth="1.400" strokeDasharray="1.200 .5" /><path d="M8 9L4.500 5.500v2.500H0v2h4.500v2.500z" fill="#2c6cff" /></Ico>
          <Down $ml={8} $mt={19} $dim />
          <Ico ml={7}><path d="M0 1.500h8M0 4h3M0 14.500h8M0 12h3M1 8.500h3" stroke="#222" strokeDasharray="1.100 .8" /><path d="M8 3.500l4.800 5L8 13.500 3.500 8.500z" fill="#7fe07f" stroke="#222" strokeWidth="1.200" /><path d="M8 6v5M5.500 8.500h5" stroke="#1a9a1a" strokeDasharray="1 .5" /><Spot x={14.300} y={8.500} /></Ico>
          <Divider $ml={12} $mt={9} />
          <BarLabel $ml={15} $mt={7} $w={61} $dim $ls={-0.2}>Search:</BarLabel>
          <Field $ml={4} $mt={7} $w={173} $plain />
          <PushButton $ml={3} $mt={7} $w={26} $h={27}><BigDown $dim /></PushButton>
          <Ico ml={7} mt={9} dim><g transform="translate(3 0)"><Binoculars c="#555" /></g><path d="M0 12l4-3.500V11h3v3H4v2z" fill="#3030ff" /></Ico>
        </Bar>
      </BarRow>

      <BarRow $h={48}>
        <Bar $w={4} $first />
        <Bar $w={290}>
          <Handle />
          <PushButton $ml={14} $mt={6} $in><Inner><path d="M8 2v12M1.500 14h13" stroke="#0a8a35" strokeWidth="1.200" fill="none" /></Inner></PushButton>
          <PushButton $mt={6}><Inner><path d="M4.500.500h7.500v14.500H4.500z" fill="#1c1c78" /><path d="M1 14h5.500V2.500h3V14h5.500" fill="none" stroke="#0a8a35" strokeWidth="1.200" /></Inner></PushButton>
          <PushButton $mt={6}><Inner><path d="M1 .500h14v14.500H1z" fill="#044a08" /><path d="M1 14h2V2.500h4V14h3V2.500h3V14h2" fill="none" stroke="#078a20" strokeWidth="1.200" /></Inner></PushButton>
          <Divider $ml={12} $mt={11} />
          <Ico ml={11} mt={10} dim><path d="M0 0h16v16H0z" fill="#24248c" /><path d="M1 14.500h7v-12h7" fill="none" stroke="#0a7a45" /></Ico>
          <Ico ml={10} mt={10}><path d="M5 0h4v16H5z" fill="#24248c" /><path d="M5 0h4v16H5z" fill="url(#dither)" /><path d="M4.500 0v14" stroke="#e8e020" /><path d="M0 14.500h5.500v-13h9" fill="none" stroke="#138a3c" strokeDasharray="1.100 .8" /></Ico>
          <Ico mt={10}><path d="M0 14.500h7.500v-13H15" fill="none" stroke="#138a3c" strokeDasharray="1.100 .8" /></Ico>
          <Ico mt={10}><path d="M7.500 0v14" stroke="#f4ec20" /><path d="M0 14.500h7.500v-13H15" fill="none" stroke="#138a3c" strokeDasharray="1.100 .8" /></Ico>
        </Bar>
      </BarRow>

      <Dock>
        <SidePane>
          <PaneTitle $h={28}><PushButton $ml={1} $mt={3} $w={21} $h={20}><Close /></PushButton></PaneTitle>
          <SideHead><span>De</span></SideHead>
          <SideRow $h={27} $on>se</SideRow>
          <SideRow $h={23}>se</SideRow>
          <SideRow $h={24}>se</SideRow>
        </SidePane>
        <Gutter $w={11} />
        <Column>
          <Panel $h={561}>
            <PaneTitle $h={28}>
              <Ico ml={1} mt={1}><Magnet /></Ico>
              <PanelButtons />
            </PaneTitle>
            <TimeStrip>
              <TimeText>{"0 ps"}</TimeText>
              <TimeBtn $w={26}><svg width="20" height="18"><path d="M0 8h7v-3l5 4-5 4v-3H0z" fill="#666" /><path d="M9 16h5V2h5" fill="none" stroke="#111" strokeWidth="1.600" /></svg></TimeBtn>
              <TimeBtn $w={17}><svg width="8" height="12"><path d="M1 0l6 6-6 6z" /></svg></TimeBtn>
            </TimeStrip>
            <ObjectList>
              {["zero", "one", "clk", "reset", "out"].map((n) => (
                <ObjectRow key={n}><Ico ml={0} mt={0}><Diamond /></Ico><Lifted>{n}</Lifted></ObjectRow>
              ))}
            </ObjectList>
            <HScroll>
              <PushButton $ml={0} $mt={0} $w={25} $h={23}><svg width="6" height="10"><path d="M6 0v10L0 5z" /></svg></PushButton>
              <PushButton $ml={0} $mt={0} $w={24} $h={23} />
              <HTrack />
              <PushButton $ml={0} $mt={0} $w={25} $h={23}><svg width="6" height="10"><path d="M0 0v10l6-5z" /></svg></PushButton>
            </HScroll>
          </Panel>
          <Panel $h={272}>
            <PaneTitle $h={28}>
              <Ico ml={1} mt={2}><Gear c="#3f6d96" /></Ico>
              <PanelButtons />
            </PaneTitle>
            <NameHead><i><svg width="12" height="11"><path d="M0 0h12L6 11z" fill="#444" /></svg></i><Lifted>Name</Lifted></NameHead>
            <Empty />
          </Panel>
        </Column>
        <Gutter $w={13} />
        <WaveWindow>
          <WaveTitle>
            <Glyph viewBox="0 0 16 16" $ml={0} $mt={1}>
              <path d="M0 0h16v16H0z" fill="#111" /><path d="M0 0h15v4H0z" fill="#f4f4f4" />
              <path d="M1 7.500h4v5H1M8 13V7.500h3v3h4" fill="none" stroke="#0aa82c" /><path d="M6.500 5v10" stroke="#18c8e8" /><path d="M9 13.500h6" stroke="#5a28d0" />
            </Glyph>
            <TitleText>Wave - Default</TitleText>
            <Stripes $w={945} />
            <svg width="33" height="14">
              {[0, 1, 2].map((r) => Array.from({ length: 6 }, (_, c) => (
                <g key={`${r}-${c}`}>
                  <rect x={4 + c * 4.600 + (r === 1 ? 2 : 0)} y={r * 5} width="1.5" height="1.5" fill="#eef6ff" />
                  <rect x={5.200 + c * 4.600 + (r === 1 ? 2 : 0)} y={r * 5 + 1.300} width="1.6" height="1.6" fill="#1c2430" />
                </g>
              )))}
            </svg>
            <Stripes />
          </WaveTitle>
          <WaveHead>
            <HeadCell $w={242}>
              <Ico ml={15} mt={2}><Magnet /></Ico>
              <Down $ml={6} $mt={15} />
            </HeadCell>
            <HeadCell $w={155}><MsgsLabel>Msgs</MsgsLabel></HeadCell>
            <HeadCell $black />
          </WaveHead>
          <WaveBody>
            <NameColumn>
              <SignalList>
                {traces.map((_, i) => (
                  <Signal key={i} $pl={29} $ls={-0.15}><Ico ml={0} mt={0}><Diamond /></Ico><Lifted>/sequence_mealy_t...</Lifted></Signal>
                ))}
              </SignalList>
              <InsertRow><svg width="6" height="10"><path d="M.700 1v8L5 5z" fill="#808080" stroke="#111" strokeWidth="1.300" /></svg></InsertRow>
            </NameColumn>
            <ValueColumn>
              <SignalList>
                {traces.map((_, i) => <Signal key={i} $pl={3} $ls={-0.4}><Lifted>-No Data-</Lifted></Signal>)}
              </SignalList>
              <EndLine $l={3} $r={6} />
            </ValueColumn>
            <Waves />
          </WaveBody>
        </WaveWindow>
      </Dock>
    </Window>
  );
}
